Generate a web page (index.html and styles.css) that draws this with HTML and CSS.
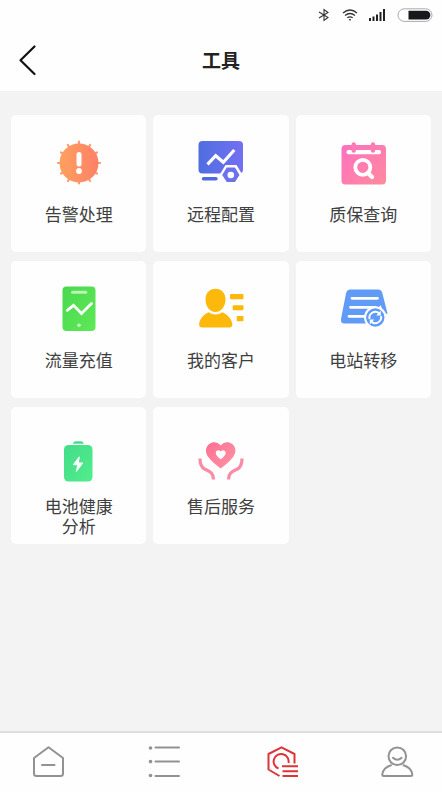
FILE: index.html
```html
<!DOCTYPE html>
<html lang="zh-CN">
<head>
<meta charset="utf-8">
<meta name="viewport" content="width=device-width, initial-scale=1">
<title>工具</title>
<link rel="stylesheet" href="styles.css">
</head>
<body>
<header class="header">
  <div class="status">
    <svg width="12" height="14" viewBox="0 0 12 14" fill="none" stroke="#333" stroke-width="1.1"><path d="M1 4l9 5.500-4 3v-11l4 3L1 10"/></svg>
    <svg class="wifi" width="16" height="14" viewBox="0 0 16 14" fill="none" stroke="#333" stroke-width="1.3"><path d="M1 5q7-6 14 0M3 7.500q5-4 10 0M5.300 9.800q2.700-2 5.400 0"/><circle cx="8" cy="11.700" r=".9" fill="#333" stroke="none"/></svg>
    <svg class="signal" width="17" height="14" viewBox="0 0 17 14" fill="#222"><path d="M0 10h2v3H0zM3.500 8.500h2V13h-2zM7 6.500h2V13H7zM10.500 4h2v9h-2zM14 1h2v12h-2z"/></svg>
    <svg width="36" height="14" viewBox="0 0 36 14"><rect x="1" y=".8" width="34" height="12.600" rx="6.300" fill="#fff" stroke="#aaa"/><path d="M11.500 2.700H29a4.400 4.400 0 0 1 0 8.800H11.500z" fill="#16181b"/></svg>
  </div>
  <div class="titlebar">
    <button class="back" type="button" aria-label="返回"><svg width="18" height="30" viewBox="0 0 18 30" fill="none" stroke="#111" stroke-width="2.200" stroke-linecap="round" stroke-linejoin="round"><path d="M15.500 1.500L1.500 15.300 15.500 29"/></svg></button>
    <h1 class="title">工具</h1>
  </div>
</header>

<main class="tools">
  <a class="card" href="#alarm">
    <svg class="icon" viewBox="0 0 48 52">
      <defs><linearGradient id="g1"><stop offset="0" stop-color="#ffa15e"/><stop offset="1" stop-color="#ff8068"/></linearGradient></defs>
      <path d="M24 2.500v5M24 40.500v4M3 24h5M40 24h5M12.900 6l2.500 4M35.100 6l-2.500 4M6 13.500l4 2.300M42 13.500l-4 2.300M6 34.500l4-2.300M42 34.500l-4-2.300M13 42l2.400-4M35 42l-2.400-4" fill="none" stroke="#ff9b72" stroke-width="2.200" stroke-linecap="round"/>
      <circle cx="24" cy="24" r="19.500" fill="url(#g1)"/>
      <path d="M24 15.500v9.500" stroke="#fff" stroke-width="5" stroke-linecap="round"/><circle cx="24" cy="32" r="2.900" fill="#fff"/>
    </svg>
    <span class="label">告警处理</span>
  </a>
  <a class="card" href="#remote">
    <svg class="icon" viewBox="0 0 48 52">
      <defs><linearGradient id="g2"><stop offset="0" stop-color="#4f6ee0"/><stop offset="1" stop-color="#7370f2"/></linearGradient></defs>
      <rect x="1.500" y="2" width="44.500" height="32.500" rx="4" fill="url(#g2)"/>
      <path d="M10.500 25.300l8.200-8.600 7.600 6.600L37.300 11" fill="none" stroke="#fff" stroke-width="3.200"/>
      <path d="M6.500 39.700h12.500" stroke="#5269dd" stroke-width="3.400" stroke-linecap="round"/>
      <path d="M28.500 26h11l6 10-6 9h-11l-6-9z" fill="#fff"/>
      <path d="M29.700 28.500h8.300l4.500 7.500-4.500 7h-8.300l-4.500-7z" fill="#6b72ec"/><circle cx="33.800" cy="36" r="3.300" fill="#fff"/>
    </svg>
    <span class="label">远程配置</span>
  </a>
  <a class="card" href="#warranty">
    <svg class="icon" viewBox="0 0 48 52">
      <defs><linearGradient id="g3" x2="1" y2="1"><stop offset="0" stop-color="#ff70c0"/><stop offset="1" stop-color="#ff8b9e"/></linearGradient></defs>
      <rect x="2.500" y="6" width="44.500" height="39.500" rx="4" fill="url(#g3)"/>
      <rect x="7.500" y="11" width="34.500" height="4.200" rx="2" fill="#fff"/>
      <path d="M14.700 5.500v6M34 5.500v6" stroke="#ff7ab6" stroke-width="4.400" stroke-linecap="round"/>
      <circle cx="23.800" cy="28.300" r="7.500" fill="none" stroke="#fff" stroke-width="3.800"/><path d="M29 34l4 4" stroke="#fff" stroke-width="4.200" stroke-linecap="round"/>
    </svg>
    <span class="label">质保查询</span>
  </a>
  <a class="card" href="#recharge">
    <svg class="icon" viewBox="0 0 48 52">
      <defs><linearGradient id="g4" y2="1"><stop offset="0" stop-color="#48d94e"/><stop offset="1" stop-color="#60e857"/></linearGradient></defs>
      <rect x="7.500" y="1.500" width="33" height="44.500" rx="4" fill="url(#g4)"/>
      <rect x="16" y="5.700" width="16.300" height="3" rx="1.500" fill="#b9f5b4"/>
      <path d="M12.300 25.300l6.200-5 8 8.200L36.500 18.500" fill="none" stroke="#fff" stroke-width="2.800" stroke-linecap="round"/><circle cx="24" cy="40.300" r="1.800" fill="#c3f7bf"/>
    </svg>
    <span class="label">流量充值</span>
  </a>
  <a class="card" href="#customers">
    <svg class="icon" viewBox="0 0 48 52" fill="#fcb90b">
      <path d="M18.500 3.800c6 0 10 4.500 10 10.500 0 7-4 12.700-10 12.700s-10-5.700-10-12.700c0-6 4-10.500 10-10.500z"/>
      <path d="M11.500 27.300q7 4.500 14 0C30.500 30 34 33 35.300 38.500q.7 4-3.300 4H5.500q-4 0-3.300-4C3.300 33 6.500 30 11.500 27.300z"/>
      <rect x="33" y="9" width="13.500" height="5.300" rx="1"/><rect x="35.700" y="20.200" width="10.800" height="5" rx="1"/><rect x="39.700" y="31" width="6.800" height="5.300" rx="1"/>
    </svg>
    <span class="label">我的客户</span>
  </a>
  <a class="card" href="#transfer">
    <svg class="icon" viewBox="0 0 48 52">
      <path d="M11.500 4.500H39q3.500 0 4.300 3.500l5.200 20.500-3 1-4-9.500L30 38.500H5.500q-4 0-3.500-4.500L7 8.500q.8-4 4.500-4z" fill="#609bf8"/>
      <path d="M13 13.300h25.500M11.500 22.300H36M10 31.300h17" stroke="#fff" stroke-width="2.800" stroke-linecap="round"/>
      <circle cx="36.300" cy="32.500" r="11.200" fill="#fff"/><circle cx="36.300" cy="32.500" r="9.200" fill="#609bf8"/>
      <path d="M30.500 34a6 6 0 0 1 9.500-6M42 31a6 6 0 0 1-9.500 6" fill="none" stroke="#fff" stroke-width="1.900"/><path d="M41.800 25.500v5h-4.500zM30.800 39.500v-5h4.500z" fill="#fff"/>
    </svg>
    <span class="label">电站转移</span>
  </a>
  <a class="card" href="#battery">
    <svg class="icon" viewBox="0 0 48 52">
      <defs><linearGradient id="g7" y2="1"><stop offset="0" stop-color="#42dd88"/><stop offset="1" stop-color="#52ed8d"/></linearGradient></defs>
      <path d="M17.700 12.800q.7-2.500 3-2.500h5.300q2.300 0 3 2.500z" fill="#45dc89"/>
      <rect x="9" y="14" width="28.500" height="36.500" rx="4.500" fill="url(#g7)"/>
      <path d="M24.300 25.800l-6 7.900h4.500l-1.500 6.800 6.500-8.500h-4.500z" fill="#fff" stroke="#fff" stroke-linejoin="round"/>
    </svg>
    <span class="label">电池健康分析</span>
  </a>
  <a class="card" href="#service">
    <svg class="icon" viewBox="0 0 48 52">
      <defs><linearGradient id="g8" x2="1" y2="1"><stop offset="0" stop-color="#ff6e92"/><stop offset="1" stop-color="#ff95a5"/></linearGradient></defs>
      <path d="M23.700 14.500c3.500-4 8-4 11.200-1.700 4.500 3.400 4.500 9 1 13.500-3 4-8 8-12.200 11.200C19.500 34.300 14.500 30.300 11.500 26.300c-3.500-4.500-3.500-10.100 1-13.500 3.200-2.300 7.700-2.300 11.200 1.700z" fill="url(#g8)"/>
      <path d="M23.700 20.500c1.500-2 5-1.400 5 1.500 0 2.300-2.700 4.600-5 6.300-2.300-1.700-5-4-5-6.300 0-2.900 3.500-3.500 5-1.500z" fill="#fff"/>
      <path d="M3 27.500c0 5.500 1 8.500 4.500 10.500 5 2.500 9 3.500 9 10.500M45 27.500c0 5.500-1 8.500-4.500 10.500-5 2.500-9 3.500-9 10.500" fill="none" stroke="#f98ba6" stroke-width="3.200"/>
    </svg>
    <span class="label">售后服务</span>
  </a>
</main>

<nav class="tabs">
  <a class="tab" href="#home" aria-label="首页"><svg width="32" height="32" viewBox="0 0 32 32"><path d="M16.500 1.300L31 12v15.500q0 2.500-2.500 2.500h-24Q2 30 2 27.500V12zM10 19h12.500"/></svg></a>
  <a class="tab" href="#list" aria-label="列表"><svg width="32" height="32" viewBox="0 0 32 32"><path d="M7.500 1.500h23.500M7.500 15.500h23.500M7.500 30h23.500"/><g fill="#929292" stroke="none"><circle cx="2.500" cy="2" r="1.800"/><circle cx="2.500" cy="15.600" r="1.800"/><circle cx="2.500" cy="29.500" r="1.800"/></g></svg></a>
  <a class="tab tab-active" href="#tools" aria-label="工具" aria-current="page"><svg width="32" height="32" viewBox="-2 0 32 32"><path d="M27.500 17.500V8L14.500 1.300 1.500 8v15.500L12.500 30M11.500 22.500a7.500 7.500 0 1 1 10-5.500M15 20.300h16M15.500 25.300h15.500M15.500 30h15.500"/></svg></a>
  <a class="tab" href="#me" aria-label="我的"><svg width="32" height="32" viewBox="0 0 32 32"><circle cx="16.300" cy="10.300" r="8.800"/><path d="M12 11.800q4.300 3.800 8.600 0M10 19.200C4.500 21 1.500 25 1.300 28.500q0 1.500 1.500 1.500h27q1.500 0 1.500-1.500C31 25 28 21 22.600 19.200"/></svg></a>
</nav>
</body>
</html>
```
FILE: styles.css
```css
* {
  box-sizing: border-box;
}

body {
  margin: 0;
  min-height: 100vh;
  display: flex;
  flex-direction: column;
  background: #f3f3f3;
  color: #3f3f3f;
  font-family: "Noto Sans CJK SC", sans-serif;
}

svg {
  display: block;
  overflow: visible;
}

.header {
  background: #fefefe;
}

.status {
  display: flex;
  align-items: center;
  justify-content: flex-end;
  height: 29px;
  padding: 0 9px;
}

.wifi {
  margin: 0 11px 0 12px;
}

.signal {
  margin-right: 11px;
}

.titlebar {
  display: grid;
  grid-template-columns: 48px 1fr 48px;
  align-items: center;
  height: 62px;
}

.back {
  height: 48px;
  padding: 0 0 0 19px;
  border: 0;
  background: none;
}

.title {
  margin: 0;
  color: #222;
  font-size: 19px;
  font-weight: 700;
  line-height: 28px;
  text-align: center;
}

.tools {
  flex: 1;
  display: grid;
  grid-template-columns: repeat(3, 1fr);
  align-content: start;
  gap: 9px 7px;
  padding: 24px 11px;
}

.card {
  display: flex;
  flex-direction: column;
  align-items: center;
  gap: 13px;
  min-height: 137px;
  padding: 24px 32px 6px;
  border-radius: 5px;
  background: #fefefe;
  color: inherit;
  text-decoration: none;
}

.icon {
  width: 48px;
  height: 52px;
}

.label {
  font-size: 17px;
  line-height: 20px;
  text-align: center;
}

.tabs {
  display: flex;
  justify-content: space-between;
  height: 61px;
  padding: 13px 29px 0 32px;
  border-top: 2px solid #dedede;
  background: #fefefe;
}

.tab {
  color: #929292;
}

.tab svg {
  fill: none;
  stroke: currentColor;
  stroke-width: 2;
  stroke-linecap: round;
  stroke-linejoin: round;
}

.tab-active {
  color: #dc3539;
}

.tab-active svg {
  stroke-linecap: butt;
}
```
